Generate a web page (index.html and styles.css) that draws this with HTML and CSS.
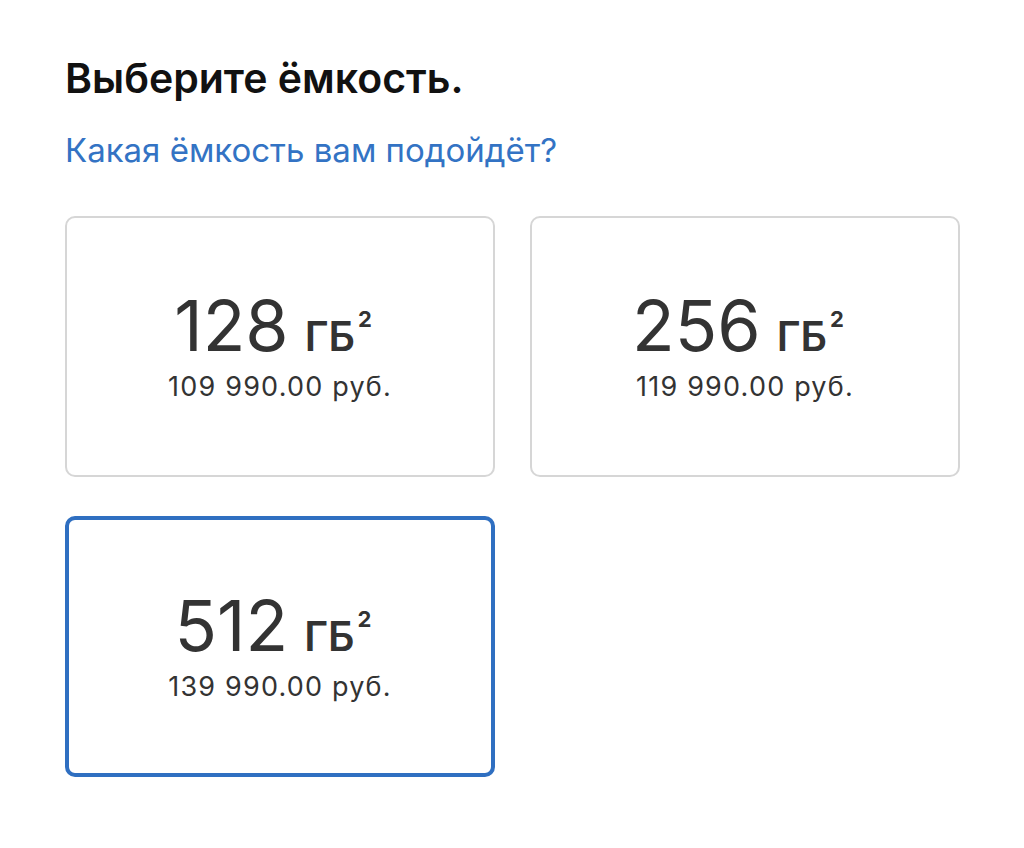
FILE: index.html
```html
<!DOCTYPE html>
<html lang="ru">
<head>
<meta charset="utf-8">
<link rel="stylesheet" href="styles.css">
</head>
<body>
<main class="page">
  <h1 class="title">Выберите ёмкость.</h1>
  <a class="help" href="#">Какая ёмкость вам подойдёт?</a>
  <div class="grid">
    <div class="card">
      <div class="size"><span class="num">128</span><span class="unit">ГБ</span><sup class="note">2</sup></div>
      <div class="price">109 990.00 руб.</div>
    </div>
    <div class="card">
      <div class="size"><span class="num">256</span><span class="unit">ГБ</span><sup class="note">2</sup></div>
      <div class="price">119 990.00 руб.</div>
    </div>
    <div class="card selected">
      <div class="size"><span class="num">512</span><span class="unit">ГБ</span><sup class="note">2</sup></div>
      <div class="price">139 990.00 руб.</div>
    </div>
  </div>
</main>
</body>
</html>
```
FILE: styles.css
```css
html, body {
  margin: 0;
  background: #ffffff;
}
body {
  font-family: Inter, "Liberation Sans", Arial, sans-serif;
  color: #1d1d1f;
}
.page {
  padding: 54px 0 0 65px;
}
.title {
  margin: 0;
  font-size: 41px;
  font-weight: 600;
  line-height: 48px;
  color: #111111;
}
.help {
  display: block;
  margin-top: 28px;
  font-size: 33px;
  line-height: 40px;
  color: #3373c4;
  text-decoration: none;
}
.grid {
  margin-top: 46px;
  display: grid;
  grid-template-columns: 430px 430px;
  column-gap: 35px;
  row-gap: 39px;
}
.card {
  height: 261px;
  box-sizing: border-box;
  border: 2px solid #d6d6d6;
  border-radius: 10px;
  display: flex;
  flex-direction: column;
  align-items: center;
  justify-content: center;
  color: #333333;
}
.card.selected {
  border: 4px solid #2f6fc1;
}
.size {
  line-height: 70px;
  white-space: nowrap;
}
.num {
  font-size: 70px;
}
.unit {
  margin-left: 16px;
  font-size: 41px;
  font-weight: 600;
}
.note {
  margin-left: 3px;
  margin-right: 14px;
  font-size: 22px;
  font-weight: 700;
  vertical-align: 0;
  position: relative;
  top: -24px;
}
.price {
  font-size: 27px;
  letter-spacing: 1.2px;
  line-height: 30px;
  margin-top: -8px;
}
```
